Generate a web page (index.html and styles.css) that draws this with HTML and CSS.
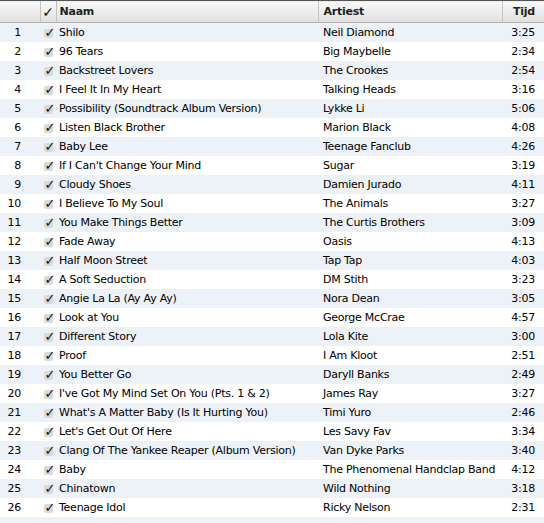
FILE: index.html
```html
<!DOCTYPE html>
<html lang="nl">
<head>
    <meta charset="UTF-8">
    <title>Afspeellijst</title>
    <link rel="stylesheet" href="styles.css">
</head>
<body>
    <table class="tracks">
        <colgroup>
            <col class="c-num">
            <col class="c-check">
            <col class="c-name">
            <col class="c-artist">
            <col class="c-time">
        </colgroup>
        <thead>
            <tr>
                <th class="num"></th>
                <th class="check">✓</th>
                <th>Naam</th>
                <th class="artist">Artiest</th>
                <th class="time">Tijd</th>
            </tr>
        </thead>
        <tbody id="rows"></tbody>
    </table>

    <script>
        const songs = [
            ['Shilo', 'Neil Diamond', '3:25'],
            ['96 Tears', 'Big Maybelle', '2:34'],
            ['Backstreet Lovers', 'The Crookes', '2:54'],
            ['I Feel It In My Heart', 'Talking Heads', '3:16'],
            ['Possibility (Soundtrack Album Version)', 'Lykke Li', '5:06'],
            ['Listen Black Brother', 'Marion Black', '4:08'],
            ['Baby Lee', 'Teenage Fanclub', '4:26'],
            ['If I Can\'t Change Your Mind', 'Sugar', '3:19'],
            ['Cloudy Shoes', 'Damien Jurado', '4:11'],
            ['I Believe To My Soul', 'The Animals', '3:27'],
            ['You Make Things Better', 'The Curtis Brothers', '3:09'],
            ['Fade Away', 'Oasis', '4:13'],
            ['Half Moon Street', 'Tap Tap', '4:03'],
            ['A Soft Seduction', 'DM Stith', '3:23'],
            ['Angie La La (Ay Ay Ay)', 'Nora Dean', '3:05'],
            ['Look at You', 'George McCrae', '4:57'],
            ['Different Story', 'Lola Kite', '3:00'],
            ['Proof', 'I Am Kloot', '2:51'],
            ['You Better Go', 'Daryll Banks', '2:49'],
            ['I\'ve Got My Mind Set On You (Pts. 1 & 2)', 'James Ray', '3:27'],
            ['What\'s A Matter Baby (Is It Hurting You)', 'Timi Yuro', '2:46'],
            ['Let\'s Get Out Of Here', 'Les Savy Fav', '3:34'],
            ['Clang Of The Yankee Reaper (Album Version)', 'Van Dyke Parks', '3:40'],
            ['Baby', 'The Phenomenal Handclap Band', '4:12'],
            ['Chinatown', 'Wild Nothing', '3:18'],
            ['Teenage Idol', 'Ricky Nelson', '2:31']
        ];

        const tbody = document.getElementById('rows');
        songs.forEach(function (song, i) {
            const tr = document.createElement('tr');
            tr.innerHTML =
                '<td class="num">' + (i + 1) + '</td>' +
                '<td class="check"><span class="box">✓</span></td>' +
                '<td></td><td class="artist"></td>' +
                '<td class="time"></td>';
            tr.children[2].textContent = song[0];
            tr.children[3].textContent = song[1];
            tr.children[4].textContent = song[2];
            tbody.appendChild(tr);
        });
        // empty filler row at the bottom
        const filler = document.createElement('tr');
        filler.innerHTML = '<td></td><td></td><td></td><td></td><td></td>';
        tbody.appendChild(filler);
    </script>
</body>
</html>
```

FILE: styles.css
```css
html, body {
    margin: 0;
    padding: 0;
    background: #fff;
    overflow: hidden;
}

.tracks {
    width: 544px;
    border-collapse: collapse;
    table-layout: fixed;
    font-family: "DejaVu Sans", sans-serif;
    font-size: 11px;
    letter-spacing: -0.25px;
    color: #000;
}

.c-num { width: 40px; }
.c-check { width: 16px; }
.c-name { width: 262px; }
.c-artist { width: 184px; }
.c-time { width: 42px; }

.tracks th {
    height: 21px;
    padding: 0 0 0 3px;
    text-align: left;
    font-weight: bold;
    color: #222;
    background: linear-gradient(#f9f9f9, #ececec 50%, #e0e0e0);
    border-top: 1px solid #555;
    border-bottom: 1px solid #b4b4b4;
    border-left: 1px solid #c4c4c4;
    white-space: nowrap;
}

.tracks th:first-child {
    border-left: none;
}

.tracks th.check {
    padding: 0;
    text-align: center;
    font-size: 14px;
    color: #111;
}

.tracks th.artist,
.tracks td.artist {
    padding-left: 5px;
}

.tracks th.time {
    text-align: right;
    padding-right: 9px;
}

.tracks td {
    height: 19px;
    padding: 0 0 0 3px;
    white-space: nowrap;
    overflow: hidden;
}

.tracks tbody tr:nth-child(odd) {
    background: #edf2f9;
}

.tracks td.num {
    text-align: right;
    padding: 0 19px 0 0;
}

.tracks td.check {
    padding: 0;
    text-align: center;
}

.box {
    display: inline-block;
    width: 9px;
    height: 9px;
    line-height: 8px;
    background: #dadada;
    border-radius: 2px;
    font-size: 13px;
    font-weight: bold;
    text-align: center;
    text-indent: 1px;
    vertical-align: middle;
    color: #111;
}

.tracks td.time {
    text-align: right;
    padding-right: 9px;
}
```
